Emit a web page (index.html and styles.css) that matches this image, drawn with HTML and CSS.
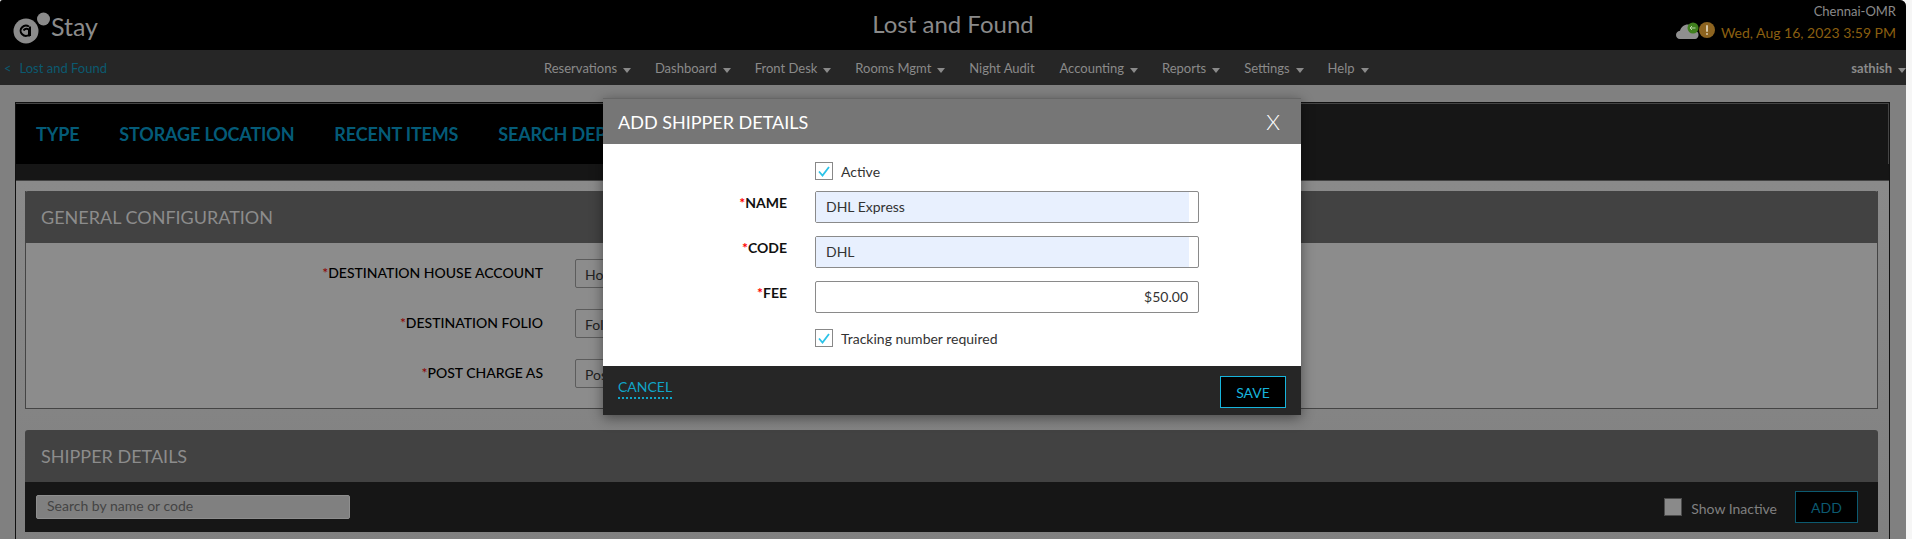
FILE: index.html
```html
<!DOCTYPE html>
<html lang="en">
<head>
<meta charset="utf-8">
<title>Lost and Found</title>
<link rel="stylesheet" href="styles.css">
</head>
<body>
<div class="page">
  <header class="topbar">
    <div class="brand">
      <svg class="logo" width="52" height="40" viewBox="0 0 52 40" aria-hidden="true">
        <circle cx="25" cy="26" r="12.500" fill="#8b8b8b"/>
        <circle cx="42.500" cy="14" r="6.500" fill="#8b8b8b"/>
        <path d="M28 21.500a5.500 5 0 1 0 0 8.500M22.500 25.500c1-2 4.500-2.500 5.500-.5v6.500" fill="none" stroke="#000" stroke-width="2"/>
        <path d="M29 21.500v9.500" fill="none" stroke="#000" stroke-width="2"/>
      </svg>
      <span class="brand-name">Stay</span>
    </div>
    <h1 class="page-title">Lost and Found</h1>
    <div class="status">
      <div class="property">Chennai-OMR</div>
      <div class="status-row">
        <svg class="status-icons" width="40" height="22" viewBox="0 0 40 22" aria-hidden="true">
          <path d="M4 17C1.500 17 0 15 0 13c0-2 1.500-4 4-4.200C5 5 8 2.500 12 2.500c4 0 7 3 7.500 6.500 2 .3 3 2 3 4 0 2-1.500 4-3.500 4z" fill="#8f8f8f"/>
          <circle cx="17" cy="6" r="5.500" fill="#3f7f1d"/>
          <path d="M19.500 6h-5M16 4l-2 2 2 2" fill="none" stroke="#b9d8a8" stroke-width="1"/>
          <circle cx="31" cy="8" r="8" fill="#8d6420"/>
          <rect x="30" y="3" width="2" height="7" rx="1" fill="#d8c8a8"/>
          <rect x="30" y="11" width="2" height="2" rx="1" fill="#d8c8a8"/>
        </svg>
        <span class="datetime">Wed, Aug 16, 2023 3:59 PM</span>
      </div>
    </div>
  </header>

  <nav class="navbar">
    <a class="back-link"><span class="back-caret">&lt;</span>Lost and Found</a>
    <ul class="menu">
      <li class="menu-item has-caret">Reservations</li>
      <li class="menu-item has-caret">Dashboard</li>
      <li class="menu-item has-caret">Front Desk</li>
      <li class="menu-item has-caret">Rooms Mgmt</li>
      <li class="menu-item">Night Audit</li>
      <li class="menu-item has-caret">Accounting</li>
      <li class="menu-item has-caret">Reports</li>
      <li class="menu-item has-caret">Settings</li>
      <li class="menu-item has-caret">Help</li>
    </ul>
    <div class="user has-caret">sathish</div>
  </nav>

  <main class="content">
    <div class="panel">
      <div class="tabs-bar">
        <div class="tabs">
          <a class="tab">TYPE</a>
          <a class="tab">STORAGE LOCATION</a>
          <a class="tab">RECENT ITEMS</a>
          <a class="tab">SEARCH DEP</a>
        </div>
      </div>
      <div class="tabs-strip"></div>
      <div class="panel-body">
        <section class="card config-card">
          <h2 class="card-title">GENERAL CONFIGURATION</h2>
          <div class="config-form">
            <div class="config-row">
              <label class="config-label"><span class="req">*</span>DESTINATION HOUSE ACCOUNT</label>
              <div class="fake-select">House Account</div>
            </div>
            <div class="config-row">
              <label class="config-label"><span class="req">*</span>DESTINATION FOLIO</label>
              <div class="fake-select">Folio</div>
            </div>
            <div class="config-row">
              <label class="config-label"><span class="req">*</span>POST CHARGE AS</label>
              <div class="fake-select">Post</div>
            </div>
          </div>
        </section>
        <section class="card shipper-card">
          <h2 class="card-title">SHIPPER DETAILS</h2>
          <div class="toolbar">
            <div class="search-box">Search by name or code</div>
            <div class="toolbar-right">
              <span class="plain-check"></span>
              <span class="show-inactive">Show Inactive</span>
              <button class="add-btn">ADD</button>
            </div>
          </div>
        </section>
      </div>
    </div>
  </main>

  <div class="modal">
    <div class="modal-head">
      <span class="modal-title">ADD SHIPPER DETAILS</span>
      <span class="modal-close">X</span>
    </div>
    <div class="modal-body">
      <div class="form-row check-row first-check">
        <span class="check"><svg width="18" height="18" viewBox="0 0 18 18" aria-hidden="true"><path d="M4 9.500l3.500 4L14 5" fill="none" stroke="#2cc3e8" stroke-width="1.800"/></svg></span>
        <span class="check-label">Active</span>
      </div>
      <div class="form-row">
        <label class="form-label"><span class="req-bright">*</span>NAME</label>
        <div class="text-input autofill"><span class="fill">DHL Express</span></div>
      </div>
      <div class="form-row">
        <label class="form-label"><span class="req-bright">*</span>CODE</label>
        <div class="text-input autofill"><span class="fill">DHL</span></div>
      </div>
      <div class="form-row fee-row">
        <label class="form-label"><span class="req-bright">*</span>FEE</label>
        <div class="text-input money">$50.00</div>
      </div>
      <div class="form-row check-row">
        <span class="check"><svg width="18" height="18" viewBox="0 0 18 18" aria-hidden="true"><path d="M4 9.500l3.500 4L14 5" fill="none" stroke="#2cc3e8" stroke-width="1.800"/></svg></span>
        <span class="check-label">Tracking number required</span>
      </div>
    </div>
    <div class="modal-foot">
      <a class="cancel">CANCEL</a>
      <button class="save">SAVE</button>
    </div>
  </div>
</div>
</body>
</html>
```
FILE: styles.css
```css
* { box-sizing: border-box; }
html, body { margin: 0; padding: 0; height: 539px; overflow: hidden; background: #f6f6f6; }
body { font-family: "Lato", "Liberation Sans", sans-serif; }
.page { position: relative; width: 1906px; height: 539px; overflow: hidden; background: #808080; border-radius: 3px 6px 0 0; }

.topbar { position: relative; height: 50px; background: #000; display: flex; justify-content: space-between; align-items: flex-start; }
.brand { display: flex; align-items: center; height: 50px; padding-left: 1px; }
.logo { display: block; flex: none; }
.brand-name { font-size: 25px; color: #8b8b8b; margin-left: -2px; margin-top: 2px; }
.page-title { position: absolute; left: 0; right: 0; top: 8px; margin: 0; text-align: center; font-size: 24px; line-height: 31px; font-weight: 400; color: #8a8a8a; }
.status { padding: 3px 10px 0 0; text-align: right; }
.property { font-size: 13px; line-height: 17px; color: #8a8a8a; }
.status-row { display: flex; align-items: flex-start; justify-content: flex-end; height: 24px; margin-top: 2px; }
.status-icons { display: block; margin-right: 5px; }
.datetime { font-size: 14px; line-height: 22px; color: #8a5f10; }

.navbar { height: 35px; background: #262626; display: flex; align-items: center; position: relative; padding: 0 0 0 4px; }
.back-link { font-size: 13px; color: #0b5a70; }
.back-caret { margin-right: 8px; }
.menu { list-style: none; margin: 0 0 0 437px; padding: 0; display: flex; gap: 24.900px; }
.menu-item { font-size: 13px; color: #8a8a8a; }
.has-caret::after { content: ""; display: inline-block; margin-left: 6px; vertical-align: 0; border-left: 4px solid transparent; border-right: 4px solid transparent; border-top: 5px solid #8a8a8a; }
.menu-item.has-caret { margin-right: -1px; }
.user { position: absolute; right: 0; font-size: 13px; font-weight: 700; color: #8a8a8a; }

.content { padding: 17px 16px 0 15px; }
.panel { border: 1px solid #111; border-bottom: 0; background: #8a8a8a; height: 460px; }
.tabs-bar { height: 61px; background: #161616; border-top: 1px solid #444; border-right: 1px solid #444; }
.tabs { height: 60px; width: 1000px; background: #000; display: flex; align-items: center; gap: 40px; padding: 0 0 0 20px; white-space: nowrap; overflow: hidden; }
.tab { font-size: 18px; font-weight: 700; letter-spacing: -.15px; color: #045b78; }
.tabs-strip { height: 17px; background: #161616; border-bottom: 1px solid #444; }
.panel-body { padding: 10px 11px 0 9px; background: linear-gradient(#8a8a8a, #808080); height: 380px; }
.card { display: block; }
.card-title { margin: 0; height: 52px; line-height: 52px; padding-left: 16px; font-size: 18px; font-weight: 400; color: #8c8c8c; background: #424242; border-radius: 3px 3px 0 0; }
.config-card { height: 218px; border-bottom: 1px solid #444; border-left: 1px solid #444; border-right: 1px solid #444; background: #8c8c8c; }
.config-card .card-title { margin: 0 -1px; }
.config-form { padding-top: 16px; display: flex; flex-direction: column; gap: 21px; }
.config-row { display: flex; align-items: flex-start; height: 29px; }
.config-label { width: 517px; text-align: right; font-size: 14px; line-height: 28px; font-weight: 500; color: #000; margin-right: 32px; }
.req { color: #8c0000; }
.fake-select { width: 300px; height: 29px; border: 1px solid #5c5c5c; border-radius: 2px; padding: 0 9px; font-size: 14px; line-height: 29px; color: #222; }
.shipper-card { margin-top: 21px; }
.toolbar { height: 50px; background: #161616; display: flex; justify-content: space-between; align-items: center; padding: 0 20px 0 11px; }
.search-box { width: 314px; height: 24px; background: #808080; border: 1px solid #8e8e8e; border-radius: 2px; padding-left: 10px; font-size: 14px; line-height: 20px; color: #444; }
.toolbar-right { display: flex; align-items: center; }
.plain-check { width: 18px; height: 18px; background: #8a8a8a; border: 1px solid #4c4c4c; }
.show-inactive { font-size: 14px; color: #808080; margin-left: 9px; margin-right: 18px; margin-top: 2px; }
.add-btn { width: 63px; height: 32px; background: #000; border: 1px solid #0c5a70; color: #0c5a70; font: 400 14px "Lato", sans-serif; padding: 0; }

.modal { position: absolute; left: 603px; top: 98px; width: 698px; height: 317px; display: flex; flex-direction: column; box-shadow: 0 3px 12px rgba(0,0,0,.45); }
.modal-head { height: 46px; background: #767676; display: flex; align-items: center; justify-content: space-between; padding: 0 21px 0 15px; border-top: 1px solid #666; }
.modal-title { font-size: 18px; color: #fff; }
.modal-close { font-size: 22px; font-weight: 300; line-height: 24px; color: #fff; }
.modal-body { flex: 1; background: #fff; }
.form-row { display: flex; align-items: flex-start; height: 32px; margin-bottom: 13px; padding-left: 212px; }
.fee-row { margin-bottom: 16px; }
.check-row { height: 18px; margin-bottom: 11px; }
.first-check { margin-top: 18px; }
.check { width: 18px; height: 18px; border: 1px solid #888; flex: none; display: block; }
.check svg { display: block; margin: -1px; }
.check-label { font-size: 14px; line-height: 20px; color: #333; margin-left: 8px; }
.form-label { position: absolute; left: 0; width: 184px; text-align: right; font-size: 14px; font-weight: 700; line-height: 24px; color: #111; }
.req-bright { color: #f00; }
.text-input { width: 384px; height: 32px; border: 1px solid #8a8a8a; border-radius: 2px; font-size: 14px; line-height: 30px; color: #333; background: #fff; }
.fill { display: block; width: 373px; height: 30px; background: #e8f0fe; padding-left: 10px; }
.money { text-align: right; padding-right: 10px; }
.modal-foot { height: 49px; background: #262626; display: flex; align-items: flex-start; justify-content: space-between; padding: 10px 15px 0; }
.cancel { font-size: 14px; line-height: 21px; color: #10a4c8; border-bottom: 2px dotted #10a4c8; height: 23px; }
.save { width: 66px; height: 32px; background: #000; border: 1px solid #17b4dc; color: #17b4dc; font: 400 14px "Lato", sans-serif; padding: 0; }
```
